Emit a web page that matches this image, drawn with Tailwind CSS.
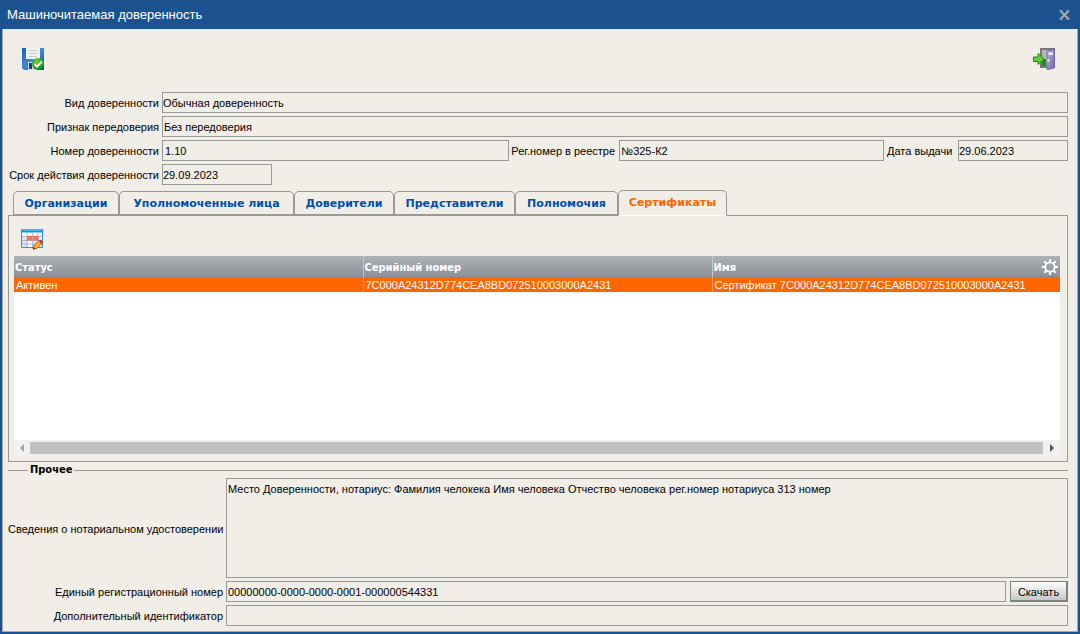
<!DOCTYPE html>
<html lang="ru">
<head>
<meta charset="utf-8">
<meta name="viewport" content="width=device-width, initial-scale=1">
<title>Машиночитаемая доверенность</title>
<script src="https://cdn.jsdelivr.net/npm/@tailwindcss/browser@4"></script>
</head>
<body class="flex min-h-screen flex-col bg-[#1d5290] px-[2px] pb-[2px] font-['Liberation_Sans',sans-serif] text-[11px] leading-4 text-black">
<header class="flex h-[29px] items-center justify-between pr-2 pl-[5px] text-white">
  <h1 class="text-[13px]">Машиночитаемая доверенность</h1>
  <button type="button" aria-label="Закрыть" class="p-0"><svg class="h-[10px] w-[11px]" viewBox="0 0 11 10" fill="none" stroke="#a8abad" stroke-width="2"><path d="M2 1.5 9 8.5M9 1.5 2 8.5"/><path d="M0.5 1h3M7.5 1h3M0.5 9h3M7.5 9h3" stroke-width="1.500"/></svg></button>
</header>
<main class="flex flex-1 flex-col border-x border-b border-[#a9a99f] bg-[#f1eee7] pr-[9px] pb-[5px] pl-[5px]">
  <div class="flex h-[63px] items-center justify-between pr-[12px] pb-1 pl-[14px]">
    <button type="button" aria-label="Сохранить" class="p-0"><svg class="size-[22px]" viewBox="0 0 22 22">
      <defs><linearGradient id="disk" x1="0" y1="0" x2="1" y2="1"><stop stop-color="#1765b8"/><stop offset=".5" stop-color="#3c8ad8"/><stop offset="1" stop-color="#0e4790"/></linearGradient><radialGradient id="ok" cx=".4" cy=".3" r=".7"><stop stop-color="#64d23d"/><stop offset="1" stop-color="#079310"/></radialGradient></defs>
      <path d="M0 0H22V22H2L0 20Z" fill="url(#disk)"/><path d="M4 0H18V11H4Z" fill="#f1f1ef"/><path d="M7 2.5h8M7 5.5h8M7 8.5h8" stroke="#cacaca"/><path d="M6 14h11v8H6Z" fill="#ccd9e6"/><path d="M7 15h3v6H7Z" fill="#17457c"/>
      <circle cx="16" cy="16" r="6" fill="url(#ok)"/><path d="M12.5 16 15 18.5 20 13.5" fill="none" stroke="#fff" stroke-width="2"/>
    </svg></button>
    <button type="button" aria-label="Выход" class="p-0"><svg class="h-[22px] w-[23px]" viewBox="0 0 23 22">
      <defs><linearGradient id="door" x1="0" y1="0" x2="1" y2="1"><stop stop-color="#b6b6e2"/><stop offset="1" stop-color="#6765ac"/></linearGradient></defs>
      <path d="M7 0H22V20H7Z" fill="#77777b"/><path d="M9 2H20V18H9Z" fill="#b5b6b6"/><path d="M9 11h4v7H9Z" fill="#238c1b"/><path d="M14 3 21.500 1V20L14 22Z" fill="url(#door)" stroke="#65639b" stroke-width=".7"/><path d="M15.500 4.5h4.500V7h-4.500Z" fill="#eff0ff"/><circle cx="15.500" cy="12.5" r="1.2" fill="#eee"/>
      <path d="M.5 9H5V5.5L11 11 5 16.5V13.5H.5Z" fill="#63cf35" stroke="#23851a"/>
    </svg></button>
  </div>
  <form class="grid grid-cols-[151px_1fr] items-center gap-x-[3px] gap-y-[3px] whitespace-nowrap">
    <label for="kind" class="pt-px text-right">Вид доверенности</label>
    <input id="kind" readonly value="Обычная доверенность" class="h-[21px] w-full border border-[#999] pt-px">
    <label for="sub" class="pt-px text-right">Признак передоверия</label>
    <input id="sub" readonly value="Без передоверия" class="h-[21px] w-full border border-[#999] px-px pt-px">
    <label for="num" class="pt-px text-right">Номер доверенности</label>
    <div class="flex items-center">
      <input id="num" readonly value="1.10" class="h-[21px] min-w-0 flex-[347] border border-[#999] px-[2px] pt-px">
      <label for="reg" class="w-[110px] shrink-0 pt-px pl-[2px]">Рег.номер в реестре</label>
      <input id="reg" readonly value="№325-К2" class="h-[21px] min-w-0 flex-[265] border border-[#999] px-px pt-px">
      <label for="issued" class="w-[74px] shrink-0 pt-px pl-[3px]">Дата выдачи</label>
      <input id="issued" readonly value="29.06.2023" class="h-[21px] w-[110px] border border-[#999] pt-px">
    </div>
    <label for="term" class="pt-px text-right">Срок действия доверенности</label>
    <input id="term" readonly value="29.09.2023" class="h-[21px] w-[110px] border border-[#999] pt-px">
  </form>
  <nav role="tablist" class="relative z-10 mt-[5px] -mb-px flex h-[26px] items-end pl-[5px] font-['DejaVu_Sans',sans-serif] font-bold text-[#004eae]">
    <button role="tab" type="button" class="h-[25px] w-[106px] rounded-t-[5px] border border-b-2 border-[#999] pt-[2px]">Организации</button>
    <button role="tab" type="button" class="h-[25px] w-[175px] rounded-t-[5px] border border-b-2 border-[#999] pt-[2px]">Уполномоченные лица</button>
    <button role="tab" type="button" class="h-[25px] w-[100px] rounded-t-[5px] border border-b-2 border-[#999] pt-[2px]">Доверители</button>
    <button role="tab" type="button" class="h-[25px] w-[121px] rounded-t-[5px] border border-b-2 border-[#999] pt-[2px]">Представители</button>
    <button role="tab" type="button" class="h-[25px] w-[103px] rounded-t-[5px] border border-b-2 border-[#999] pt-[2px]">Полномочия</button>
    <button role="tab" type="button" aria-selected="true" class="h-[26px] w-[109px] rounded-t-[5px] border border-[#999] border-b-white bg-[#f1eee7] text-[#ff6600]">Сертификаты</button>
  </nav>
  <section class="flex flex-1 flex-col border border-[#999] pr-[7px] pb-[5px] pl-[5px]">
    <div class="flex h-[40px] items-center pt-[7px] pl-[7px]">
      <button type="button" aria-label="Изменить" class="p-0"><svg class="h-[21px] w-[22px]" viewBox="0 0 22 21">
        <path d="M.5.5h21v18H.5Z" fill="#fff" stroke="#1e96f5"/><path d="M0 0H22V3.5H0Z" fill="#0798ef"/><path d="M1 1h20" stroke="#77d1ff"/><path d="M1 7H7V18H1ZM12 11h9v7h-9Z" fill="#dfe4f5"/><path d="M6 7H18V11H6Z" fill="#ff7a4c"/><path d="M1 7.5h20M1 11.5h20M1 15h20M6 4v14M11.5 4v14M17 4v14" stroke="#a5a4ce" stroke-width=".8"/><path d="M6 7.5h12M6 11h12" stroke="#ff5c2e" stroke-dasharray="2 1"/>
        <path d="m12 20 1-4 6-5 2.500 3-5.500 5.500Z" fill="#ffad19" stroke="#aa6110" stroke-width=".8"/><path d="m18 12 1.500-1.500L22 13l-1.500 2Z" fill="#d92421"/><path d="m12 20.500.5-2.500 2 1.500Z" fill="#333"/>
      </svg></button>
    </div>
    <div class="relative flex-1 bg-white">
      <table class="w-full table-fixed border-collapse text-left text-white">
        <colgroup><col class="w-[349px]"><col class="w-[349px]"><col></colgroup>
        <thead class="font-['DejaVu_Sans_Condensed','DejaVu_Sans',sans-serif]"><tr class="h-[21px] bg-linear-to-b from-[#adb2b6] to-[#8c9195]">
          <th class="px-px py-0 pt-[2px]">Статус</th><th class="border-l border-[#c5c8ca] px-px py-0 pt-[2px]">Серийный номер</th><th class="border-l border-[#c5c8ca] px-px py-0 pt-[2px]">Имя</th>
        </tr></thead>
        <tbody><tr class="h-[15px] bg-[#ff6600] leading-[14px]">
          <td class="px-[2px] py-0 pt-px">Активен</td><td class="border-l border-[#ff9a55] px-[2px] py-0 pt-px">7C000A24312D774CEA8BD072510003000A2431</td><td class="border-l border-[#ff9a55] px-[2px] py-0 pt-px">Сертификат 7C000A24312D774CEA8BD072510003000A2431</td>
        </tr></tbody>
      </table>
      <button type="button" aria-label="Настройка таблицы" class="absolute top-[3px] right-[2px] p-0"><svg class="size-4" viewBox="0 0 16 16" fill="none" stroke="#fff"><circle cx="8" cy="8" r="4.700" stroke-width="1.800"/><path d="M8 0v3M8 13v3M0 8h3M13 8h3M2.300 2.300l2.200 2.200M11.500 11.500l2.200 2.200M13.700 2.300l-2.200 2.200M4.500 11.500l-2.200 2.200" stroke-width="2"/></svg></button>
    </div>
    <div class="flex h-4 items-center bg-[#f1f1f1]">
      <svg class="h-4 w-4" viewBox="0 0 16 16"><path d="M10 4v8L6 8Z" fill="#a3a3a3"/></svg>
      <div class="h-3 flex-1 bg-[#c1c1c1]"></div>
      <svg class="h-4 w-[17px]" viewBox="0 0 17 16"><path d="M7 4v8l4-4Z" fill="#505050"/></svg>
    </div>
  </section>
  <div class="flex h-4 items-center">
    <div class="h-px w-[20px] bg-[#999]"></div>
    <h2 class="px-[2px] font-['DejaVu_Sans_Condensed','DejaVu_Sans',sans-serif] font-bold">Прочее</h2>
    <div class="h-px flex-1 bg-[#999]"></div>
  </div>
  <form class="grid grid-cols-[215px_1fr] items-center gap-[3px] whitespace-nowrap">
    <label for="notary" class="pt-px text-right">Сведения о нотариальном удостоверении</label>
    <textarea id="notary" readonly class="block h-[100px] w-full resize-none border border-[#999] px-px py-[2px]">Место Доверенности, нотариус: Фамилия челокека Имя человека Отчество человека рег.номер нотариуса 313 номер</textarea>
    <label for="uid" class="pt-px text-right">Единый регистрационный номер</label>
    <div class="flex gap-1">
      <input id="uid" readonly value="00000000-0000-0000-0001-000000544331" class="h-[21px] min-w-0 flex-1 border border-[#999] px-px pt-px">
      <button type="button" class="h-[21px] w-[58px] border border-r-2 border-b-2 border-[#808080] bg-linear-to-b from-white to-[#c7c7c7] pt-px">Скачать</button>
    </div>
    <label for="extra" class="pt-px text-right">Дополнительный идентификатор</label>
    <input id="extra" readonly class="h-[21px] w-full border border-[#999]">
  </form>
</main>
</body>
</html>
